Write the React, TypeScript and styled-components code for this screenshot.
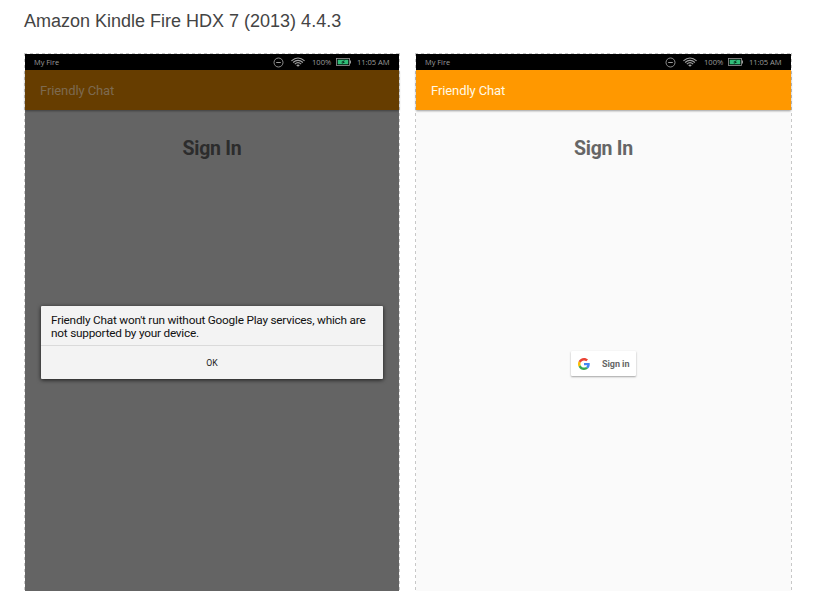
import React from "react";
import styled, { createGlobalStyle } from "styled-components";

const GlobalStyle = createGlobalStyle`
  * { box-sizing: border-box; }
  html, body { margin: 0; background: #fff; overflow: hidden; }
`;

const Page = styled.main`
  width: 821px;
  height: 591px;
  overflow: hidden;
  padding: 8px 0 0 24px;
`;

const Title = styled.h1`
  margin: 0;
  height: 45px;
  font: 400 18px/26px "Liberation Sans", Arial, sans-serif;
  color: #444;
  white-space: nowrap;
`;

const Screens = styled.div`
  display: flex;
  gap: 15px;
`;

/* The frame's dashes come from gradients so that they repeat every 6px. */
const Device = styled.section<{ $width: number; $dimmed?: boolean }>`
  width: ${(p) => p.$width}px;
  height: 670px;
  padding: 1px;
  background:
    linear-gradient(${(p) => (p.$dimmed ? "#646464, #646464" : "#fafafa, #fafafa")}) content-box,
    repeating-linear-gradient(90deg, #c8c8c8 0 3px, transparent 3px 6px) 0 0 / 100% 1px no-repeat,
    repeating-linear-gradient(180deg, #c8c8c8 0 3px, transparent 3px 6px) 0 0 / 1px 100% no-repeat,
    repeating-linear-gradient(180deg, #c8c8c8 0 3px, transparent 3px 6px) 100% 0 / 1px 100% no-repeat;
  font-family: Roboto, sans-serif;
`;

const StatusBar = styled.div`
  display: flex;
  align-items: center;
  height: 16px;
  padding: 0 9px;
  background: #000;
  color: #9b9b9b;
  font: 400 7.4px/16px "Open Sans", "Noto Sans", sans-serif;
  white-space: nowrap;
`;

const StatusItems = styled.div`
  display: flex;
  align-items: center;
  margin-left: auto;
  svg { display: block; }
`;

const WifiSlot = styled.span`
  margin-left: 7px;
`;

const Percent = styled.span`
  width: 20px;
  margin: 0 4px 0 7px;
  font-size: 7.6px;
`;

const Clock = styled.span`
  width: 33px;
  margin-left: 6px;
  font-size: 7.6px;
  letter-spacing: -0.05px;
`;

const AppBar = styled.header<{ $dimmed?: boolean }>`
  height: 40px;
  padding-left: 15px;
  background: ${(p) => (p.$dimmed ? "#663d00" : "#ff9800")};
  color: ${(p) => (p.$dimmed ? "#7d6a50" : "#fff8e6")};
  font-size: 13px;
  letter-spacing: -0.1px;
  line-height: 41px;
  box-shadow: 0 1px 2px rgba(0, 0, 0, 0.38);
`;

const Heading = styled.h2<{ $dimmed?: boolean }>`
  margin: 26px 0 0;
  text-align: center;
  font-size: 19.5px;
  letter-spacing: -0.25px;
  line-height: 25px;
  font-weight: 700;
  color: ${(p) => (p.$dimmed ? "#2c2c2c" : "#666")};
`;

const Dialog = styled.div`
  width: 342px;
  height: 73px;
  margin: 145px 0 0 16px;
  padding-top: 1px;
  border-radius: 1px;
  background: #f3f3f3;
  color: #111;
  box-shadow: 0 1px 4px rgba(0, 0, 0, 0.75);
`;

const Message = styled.p`
  margin: 0;
  height: 39px;
  padding: 7px 0 0 10px;
  border-bottom: 1px solid #dadada;
  font-size: 11.8px;
  letter-spacing: -0.22px;
  line-height: 13px;
  white-space: nowrap;
`;

const OkButton = styled.button`
  display: block;
  width: 100%;
  height: 33px;
  padding: 0;
  border: 0;
  background: none;
  color: #222;
  font: 400 8.7px/34px Roboto, sans-serif;
`;

const SignInButton = styled.button`
  display: flex;
  align-items: center;
  width: 65px;
  height: 25px;
  margin: 190px 0 0 155px;
  padding: 0 0 0 7px;
  gap: 12px;
  border: 0;
  border-radius: 1px;
  background: #fff;
  box-shadow: 0 1px 2px rgba(0, 0, 0, 0.35);
  color: #666;
  font: 700 9px/26px Roboto, sans-serif;
  letter-spacing: -0.05px;
  white-space: nowrap;
`;

const DoNotDisturb = () => (
  <svg width="11" height="11" viewBox="0 0 11 11" fill="none" stroke="#9b9b9b">
    <circle cx="5.5" cy="5.5" r="4.5" strokeWidth="0.9" />
    <path d="M3.2 5.5h4.6" strokeWidth="1" />
  </svg>
);

const Wifi = () => (
  <svg width="14" height="10" viewBox="0 0 14 10" fill="none" stroke="#a0a0a0" strokeWidth="1.15">
    <path d="M.4 3.9Q7-1.9 13.6 3.9M2.1 5.5Q7 1.2 11.9 5.5M3.8 7.1Q7 4.2 10.2 7.1" />
    <path d="M5.2 8.3Q7 6.6 8.8 8.3L7 9.8Z" fill="#a0a0a0" stroke="none" />
  </svg>
);

const Battery = () => (
  <svg width="15" height="8" viewBox="0 0 15 8">
    <rect x=".5" y=".5" width="13" height="7" fill="#000" stroke="#999" strokeWidth=".8" />
    <path d="M14 2.5h1v3h-1z" fill="#999" />
    <path d="M1.7 1.7h10.6v4.6H1.7z" fill="#31bd78" />
    <path d="M9.2 1.8 5 4.2l1.9.2-1.6 1.9 4-2.3-1.9-.3Z" fill="#06291a" />
  </svg>
);

const GoogleLogo = () => (
  <svg width="12" height="12" viewBox="0 0 48 48">
    <path fill="#EA4335" d="M24 9.5c3.54 0 6.71 1.22 9.21 3.6l6.85-6.85C35.9 2.38 30.47 0 24 0 14.62 0 6.51 5.38 2.56 13.22l7.98 6.19C12.43 13.72 17.74 9.5 24 9.5z" />
    <path fill="#4285F4" d="M46.98 24.55c0-1.57-.15-3.09-.38-4.55H24v9.02h12.94c-.58 2.96-2.26 5.48-4.78 7.18l7.73 6c4.51-4.18 7.09-10.36 7.09-17.65z" />
    <path fill="#FBBC05" d="M10.53 28.59A14.5 14.5 0 0 1 9.77 24c0-1.6.27-3.14.76-4.59l-7.98-6.19A24 24 0 0 0 0 24c0 3.88.92 7.54 2.56 10.78l7.97-6.19z" />
    <path fill="#34A853" d="M24 48c6.48 0 11.93-2.13 15.89-5.81l-7.73-6c-2.15 1.45-4.92 2.3-8.16 2.3-6.26 0-11.57-4.22-13.47-9.91l-7.98 6.19C6.51 42.62 14.62 48 24 48z" />
  </svg>
);

function Status() {
  return (
    <StatusBar>
      <span>My Fire</span>
      <StatusItems>
        <DoNotDisturb />
        <WifiSlot><Wifi /></WifiSlot>
        <Percent>100%</Percent>
        <Battery />
        <Clock>11:05 AM</Clock>
      </StatusItems>
    </StatusBar>
  );
}

export default function App() {
  return (
    <>
      <GlobalStyle />
      <Page>
        <Title>Amazon Kindle Fire HDX 7 (2013) 4.4.3</Title>
        <Screens>
          <Device $width={376} $dimmed>
            <Status />
            <AppBar $dimmed>Friendly Chat</AppBar>
            <Heading $dimmed>Sign In</Heading>
            <Dialog role="dialog">
              <Message>
                Friendly Chat won't run without Google Play services, which are
                <br />
                not supported by your device.
              </Message>
              <OkButton>OK</OkButton>
            </Dialog>
          </Device>
          <Device $width={377}>
            <Status />
            <AppBar>Friendly Chat</AppBar>
            <Heading>Sign In</Heading>
            <SignInButton>
              <GoogleLogo />
              Sign in
            </SignInButton>
          </Device>
        </Screens>
      </Page>
    </>
  );
}
